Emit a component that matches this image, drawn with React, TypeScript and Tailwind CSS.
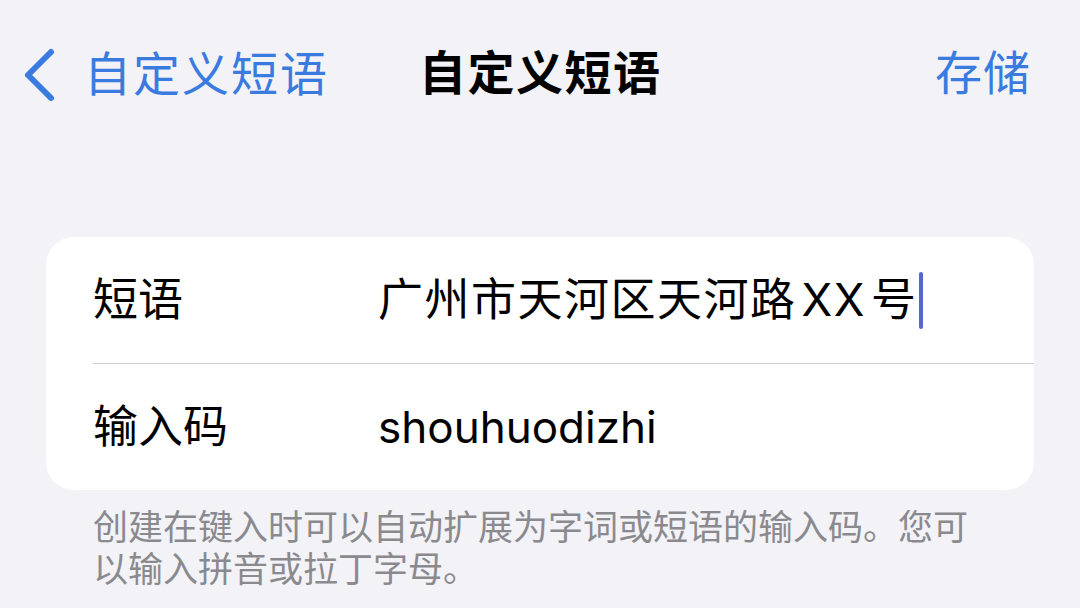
const font = { fontFamily: '"Inter", "Noto Sans CJK SC", sans-serif' };

function BackChevron() {
  return (
    <svg width="36" height="60" viewBox="0 0 36 60" fill="none" className="shrink-0">
      <path
        d="M30 8 L7 31 L30 54"
        stroke="#3a7be0"
        strokeWidth="6"
        strokeLinecap="round"
        strokeLinejoin="round"
      />
    </svg>
  );
}

export default function App() {
  return (
    <div
      className="w-[1080px] h-[608px] overflow-hidden bg-[#f2f2f7] text-black"
      style={font}
    >
      {/* Navigation bar */}
      <div className="relative flex h-[146px] items-start pt-[44px]">
        <div className="flex items-center pl-[21px] text-[#3a7be0]">
          <BackChevron />
          <span className="ml-[27px] text-[47px] leading-[58px] tracking-[2px]">自定义短语</span>
        </div>
        <div className="absolute left-[419px] top-[44px] text-[47px] font-bold leading-[58px] tracking-[1.5px]">
          自定义短语
        </div>
        <div className="ml-auto pr-[49px] text-[47px] leading-[58px] tracking-[1px] text-[#3a7be0]">存储</div>
      </div>

      {/* Grouped form */}
      <div className="mx-[46px] mt-[91px] overflow-hidden rounded-[28px] bg-white">
        <div className="flex h-[126px] items-center pl-[47px]">
          <span className="w-[285px] text-[45px]">短语</span>
          <span className="text-[45px] tracking-[1.5px]">
            广州市天河区天河路<span className="mx-[5px]">XX</span>号
          </span>
          <span className="ml-[2px] h-[57px] w-[4px] rounded-full bg-[#5566d0]" />
        </div>
        <div className="ml-[47px] h-px bg-[#cfcfd3]" />
        <div className="flex h-[126px] items-center pl-[47px]">
          <span className="w-[285px] text-[45px]">输入码</span>
          <span className="text-[44px]">shouhuodizhi</span>
        </div>
      </div>

      <p className="mt-[16px] w-[1000px] pl-[93px] text-[35px] leading-[42px] text-[#8a8a8e]">
        创建在键入时可以自动扩展为字词或短语的输入码。您可以输入拼音或拉丁字母。
      </p>
    </div>
  );
}
